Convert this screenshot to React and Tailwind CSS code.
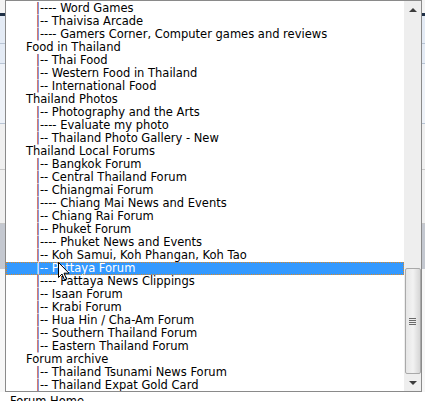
import React from "react"

const rows = [
  { d: 2, t: "Word Games" },
  { d: 1, t: "Thaivisa Arcade" },
  { d: 2, t: "Gamers Corner, Computer games and reviews" },
  { d: 0, t: "Food in Thailand" },
  { d: 1, t: "Thai Food" },
  { d: 1, t: "Western Food in Thailand" },
  { d: 1, t: "International Food" },
  { d: 0, t: "Thailand Photos" },
  { d: 1, t: "Photography and the Arts" },
  { d: 2, t: "Evaluate my photo" },
  { d: 1, t: "Thailand Photo Gallery - New" },
  { d: 0, t: "Thailand Local Forums" },
  { d: 1, t: "Bangkok Forum" },
  { d: 1, t: "Central Thailand Forum" },
  { d: 1, t: "Chiangmai Forum" },
  { d: 2, t: "Chiang Mai News and Events" },
  { d: 1, t: "Chiang Rai Forum" },
  { d: 1, t: "Phuket Forum" },
  { d: 2, t: "Phuket News and Events" },
  { d: 1, t: "Koh Samui, Koh Phangan, Koh Tao" },
  { d: 1, t: "Pattaya Forum", sel: true },
  { d: 2, t: "Pattaya News Clippings" },
  { d: 1, t: "Isaan Forum" },
  { d: 1, t: "Krabi Forum" },
  { d: 1, t: "Hua Hin / Cha-Am Forum" },
  { d: 1, t: "Southern Thailand Forum" },
  { d: 1, t: "Eastern Thailand Forum" },
  { d: 0, t: "Forum archive" },
  { d: 1, t: "Thailand Tsunami News Forum" },
  { d: 1, t: "Thailand Expat Gold Card" },
]

function Row({ row }) {
  const base = "h-[13px] leading-[13px] whitespace-pre overflow-hidden"
  if (row.d === 0) {
    return <div className={`${base} pl-[20px] text-black`}>{row.t}</div>
  }
  const dash = row.d === 2 ? "---- " : "-- "
  if (row.sel) {
    return (
      <div className={`${base} pl-[30px] bg-[#3399ff] text-white outline outline-1 outline-dotted outline-[#d98a2b] -outline-offset-1`}>
        {"|" + dash + row.t}
      </div>
    )
  }
  return (
    <div className={`${base} pl-[30px] text-black`}>
      <span className="text-[#5b1048]">|</span>
      {dash + row.t}
    </div>
  )
}

function Cursor() {
  return (
    <svg width="12" height="19" viewBox="0 0 12 19" className="absolute left-[58px] top-[262px]">
      <path d="M0.5 0.5 L0.5 15.5 L4 12 L6.5 18 L8.5 17 L6 11.2 L11 11.2 Z" fill="white" stroke="black" strokeWidth="1" strokeLinejoin="miter" />
    </svg>
  )
}

function Scrollbar() {
  return (
    <div className="w-[17px] h-full bg-[#eeeeee] flex flex-col items-center">
      <div className="h-[17px] w-full flex items-center justify-center">
        <div className="w-0 h-0 border-l-[4px] border-r-[4px] border-b-[4px] border-l-transparent border-r-transparent border-b-[#3c3c3c]" />
      </div>
      <div className="flex-1" />
      <div className="w-[16px] h-[106px] rounded-[2px] border border-[#a9a9a9] bg-gradient-to-r from-[#e6e6e6] via-[#f2f2f2] to-[#d6d6d6] flex flex-col items-center justify-center gap-[1px]">
        <div className="w-[7px] h-[1px] bg-[#6a6a6a]" />
        <div className="w-[7px] h-[1px] bg-[#6a6a6a]" />
        <div className="w-[7px] h-[1px] bg-[#6a6a6a]" />
        <div className="w-[7px] h-[1px] bg-[#6a6a6a]" />
      </div>
      <div className="h-[17px] w-full flex items-center justify-center">
        <div className="w-0 h-0 border-l-[4px] border-r-[4px] border-t-[4px] border-l-transparent border-r-transparent border-t-[#3c3c3c]" />
      </div>
    </div>
  )
}

export default function App() {
  return (
    <div className="relative w-[425px] h-[401px] overflow-hidden bg-white" style={{ fontFamily: "'DejaVu Sans', Verdana, sans-serif" }}>
      {/* page behind the dropdown */}
      <div className="absolute inset-0 flex flex-col">
        <div className="h-[13px] shrink-0 bg-[#f4f4f4]" />
        <div className="h-[3px] shrink-0 bg-[#1e2f45]" />
        <div className="h-[28px] shrink-0 bg-[#e4ebf5] border-b border-[#b8c4d4]" />
        <div className="h-[20px] shrink-0 bg-[#e4ebf5] border-b border-[#b8c4d4]" />
        <div className="h-[60px] shrink-0 bg-[#eef2f8] border-b border-[#b8c4d4]" />
        <div className="h-[46px] shrink-0 bg-[#f0f0f0] border-b border-[#c8c8c8]" />
        <div className="h-[54px] shrink-0 bg-[#f0f0f0] border-b border-[#c8c8c8]" />
        <div className="h-[45px] shrink-0 bg-[#c4c8d0]" />
        <div className="h-[123px] shrink-0 bg-[#f7f7f7]" />
        <div className="h-[9px] shrink-0 overflow-hidden bg-white text-[11.5px] leading-[12px] pl-[10px] pt-[3px] text-black whitespace-nowrap">Forum Home</div>
      </div>

      {/* dropdown list */}
      <div className="absolute left-[5px] top-0 w-[417px] h-[392px] border border-[#8a8a8a] bg-white flex text-[11.5px]">
        <div className="flex-1 pt-[1px] overflow-hidden">
          {rows.map((r, i) => (
            <Row key={i} row={r} />
          ))}
        </div>
        <Scrollbar />
      </div>
      <Cursor />
    </div>
  )
}
